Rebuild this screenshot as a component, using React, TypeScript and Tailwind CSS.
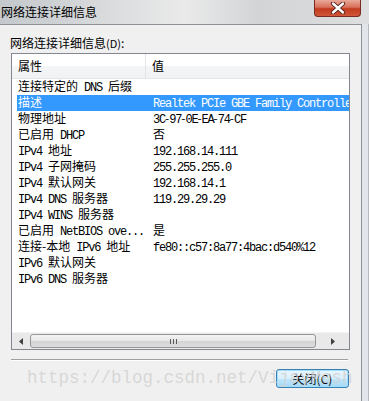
import React from 'react';

const ROWS: [string, string][] = [
  ['连接特定的 DNS 后缀', ''],
  ['描述', 'Realtek PCIe GBE Family Controller'],
  ['物理地址', '3C-97-0E-EA-74-CF'],
  ['已启用 DHCP', '否'],
  ['IPv4 地址', '192.168.14.111'],
  ['IPv4 子网掩码', '255.255.255.0'],
  ['IPv4 默认网关', '192.168.14.1'],
  ['IPv4 DNS 服务器', '119.29.29.29'],
  ['IPv4 WINS 服务器', ''],
  ['已启用 NetBIOS ove...', '是'],
  ['连接-本地 IPv6 地址', 'fe80::c57:8a77:4bac:d540%12'],
  ['IPv6 默认网关', ''],
  ['IPv6 DNS 服务器', ''],
];

const CJK = /[\u3000-\u9fff\uff00-\uffef-]/;

// SimSun-style mix: CJK at 12px, ASCII at half width (6px per char)
function Mixed({ text }: { text: string }) {
  const parts = text.match(/[\u3000-\u9fff\uff00-\uffef-]+|[^\u3000-\u9fff\uff00-\uffef-]+/g) || [];
  return (
    <>
      {parts.map((p, i) =>
        CJK.test(p) ? (
          <span key={i} className="relative top-[-1px] align-top leading-[16px] font-['Noto_Sans_CJK_SC',sans-serif] text-[12px]">{p}</span>
        ) : (
          <span key={i} className="relative top-[1px] align-top leading-[16px] font-['Liberation_Mono',monospace] text-[12px] tracking-[-1.2px] whitespace-pre">{p}</span>
        ),
      )}
    </>
  );
}

export default function App() {
  return (
    <div className="relative w-[369px] h-[401px] overflow-hidden bg-[#dfe2e6] font-['Noto_Sans_CJK_SC',sans-serif]">
      {/* title bar */}
      <div className="h-[24px] flex items-start bg-[linear-gradient(90deg,#c4c8cc_0%,#d6d8da_25%,#eaeaea_50%,#d2d4d6_70%,#dcdedf_100%)]">
        <div className="pl-[1px] pt-[4px] text-[12px] leading-[16px] text-black">网络连接详细信息</div>
        <div className="ml-auto mr-[8px] w-[47px] h-[17px] rounded-b-[4px] border border-t-0 border-[#7a2a1e] bg-[linear-gradient(180deg,#e9a99a_0%,#d8705a_45%,#c23a1e_55%,#d0563a_100%)] flex items-center justify-center">
          <svg width="16" height="12" viewBox="0 0 16 12">
            <path d="M3 1.5 L13 10.5 M13 1.5 L3 10.5" stroke="#4a1a12" strokeWidth="4.2" strokeLinecap="round" />
            <path d="M3 1.5 L13 10.5 M13 1.5 L3 10.5" stroke="#ffffff" strokeWidth="2.4" strokeLinecap="round" />
          </svg>
        </div>
      </div>

      <div className="flex">
        {/* client area */}
        <div className="w-[362px] h-[377px] bg-[#f0f0f0] border-t border-r border-[#8e9296]">
          <div className="pl-[10px] pt-[10px] text-[12px] leading-[16px] text-black">
            网络连接详细信息<span className="text-[11px]">(D)</span>:
          </div>

          <div className="ml-[11px] mt-[2px] w-[339px] h-[297px] border border-[#828790] bg-white flex flex-col overflow-hidden">
            {/* header */}
            <div className="h-[25px] shrink-0 flex border-b border-[#e5e5e5] bg-[linear-gradient(180deg,#ffffff_0%,#ffffff_50%,#f4f5f7_51%,#f1f2f4_100%)] text-[12px] text-black">
              <div className="w-[134px] pl-[6px] flex items-center border-r border-[#e3e5e8]">属性</div>
              <div className="pl-[6px] flex items-center">值</div>
            </div>

            {/* rows */}
            <div className="flex-1">
              {ROWS.map(([k, v], i) => {
                const sel = i === 1;
                return (
                  <div
                    key={i}
                    className={`ml-[5px] h-[16px] leading-[16px] flex whitespace-nowrap ${sel ? 'bg-[#3399ff] text-white' : 'text-black'}`}
                  >
                    <div className="w-[130px] h-[16px] pl-[1px] shrink-0">
                      <Mixed text={k} />
                    </div>
                    <div className="h-[16px] pl-[6px] shrink-0">
                      <Mixed text={v} />
                    </div>
                  </div>
                );
              })}
            </div>

            {/* horizontal scrollbar */}
            <div className="h-[17px] shrink-0 flex items-center bg-[#e9e9e9] border-t border-[#f4f4f4]">
              <div className="w-[18px] flex justify-center">
                <svg width="4" height="7" viewBox="0 0 4 7"><path d="M4 0 L0 3.5 L4 7 Z" fill="#404040" /></svg>
              </div>
              <div className="w-[286px] h-[14px] rounded-[3px] border border-[#979797] bg-[linear-gradient(180deg,#f4f4f4_0%,#e6e6e6_50%,#d4d4d4_51%,#dcdcdc_100%)] flex items-center justify-center gap-[2px]">
                <div className="w-[1px] h-[5px] bg-[#5a5a5a]" />
                <div className="w-[1px] h-[5px] bg-[#5a5a5a]" />
                <div className="w-[1px] h-[5px] bg-[#5a5a5a]" />
              </div>
              <div className="flex-1 flex justify-center">
                <svg width="4" height="7" viewBox="0 0 4 7"><path d="M0 0 L4 3.5 L0 7 Z" fill="#404040" /></svg>
              </div>
            </div>
          </div>

          {/* separator */}
          <div className="ml-[11px] mt-[9px] w-[337px] h-[2px] border-t border-[#a0a0a0] border-b border-b-white" />

          <div className="flex justify-end pr-[12px] mt-[8px]">
            <button className="w-[73px] h-[19px] rounded-[3px] border border-[#3c7fb1] bg-[linear-gradient(180deg,#eaf6fd_0%,#d9f0fc_50%,#bee6fd_51%,#a7d9f5_100%)] shadow-[inset_0_0_0_1px_#9fe0ff] text-[12px] leading-[16px] text-black">
              关闭(C)
            </button>
          </div>
        </div>

        {/* right frame */}
        <div className="flex-1 h-[377px] bg-[#e2e5e9] border-r border-[#b6babf]" />
      </div>

      {/* watermark */}
      <div className="absolute left-[27px] top-[367px] font-['Liberation_Mono',monospace] text-[17.5px] leading-[22px] text-[#d0d0d0]/80 whitespace-nowrap pointer-events-none">
        https://blog.csdn.net/VijayMesh
      </div>
    </div>
  );
}
